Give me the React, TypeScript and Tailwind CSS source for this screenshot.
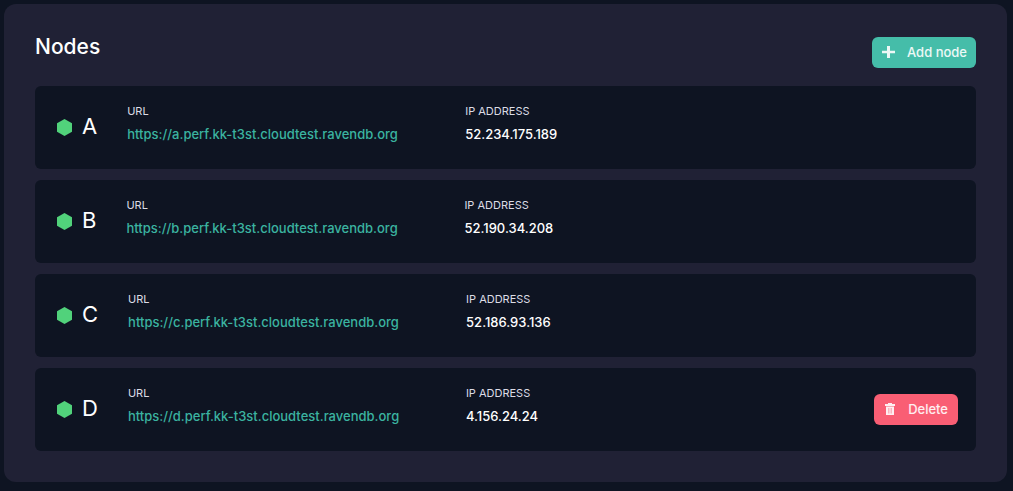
import React from "react";

type ClusterNode = {
  tag: string;
  url: string;
  ip: string;
  removable?: boolean;
};

const nodes: ClusterNode[] = [
  { tag: "A", url: "https://a.perf.kk-t3st.cloudtest.ravendb.org", ip: "52.234.175.189" },
  { tag: "B", url: "https://b.perf.kk-t3st.cloudtest.ravendb.org", ip: "52.190.34.208" },
  { tag: "C", url: "https://c.perf.kk-t3st.cloudtest.ravendb.org", ip: "52.186.93.136" },
  { tag: "D", url: "https://d.perf.kk-t3st.cloudtest.ravendb.org", ip: "4.156.24.24", removable: true },
];

const HexagonIcon: React.FC = () => (
  <svg className="h-[17px] w-[15px] shrink-0" viewBox="0 0 15 17" fill="#51d27b" aria-hidden="true">
    <path d="M7.5 0 15 4.2v8.6L7.5 17 0 12.8V4.2z" />
  </svg>
);

const PlusIcon: React.FC = () => (
  <svg className="mb-[2px] h-3 w-[13px]" viewBox="0 0 13 12" fill="currentColor" aria-hidden="true">
    <path d="M5 0h3v4.7h5v2.6H8V12H5V7.3H0V4.7h5z" />
  </svg>
);

const TrashIcon: React.FC = () => (
  <svg className="mb-[2px] h-3 w-[10px]" viewBox="0 0 10 12" fill="currentColor" aria-hidden="true">
    <path d="M3 0h4v1h3v2H0V1h3z" />
    <path d="M1 3.5h8V12H1z" />
    <path d="M3 5h.8v5.5H3zM4.6 5h.8v5.5h-.8zM6.2 5H7v5.5h-.8z" fill="#f95e74" fillOpacity="0.5" />
  </svg>
);

const NodeRow: React.FC<{ node: ClusterNode }> = ({ node }) => (
  <li className="flex h-[83px] items-center rounded-md bg-[#0e1422] pr-[18px] pl-[22px]">
    <HexagonIcon />
    <span className="mr-[30px] ml-[10px] pb-1 text-[22px] leading-7">{node.tag}</span>
    <dl className="grid grow grid-cols-[338px_1fr] pb-[6px]">
      <div>
        <dt className="text-[11px] leading-4 text-[#dcdce6]">URL</dt>
        <dd className="mt-[3px] text-[13px] leading-6 font-medium">
          <a href={node.url} className="text-[#3bb3a0]">
            {node.url}
          </a>
        </dd>
      </div>
      <div>
        <dt className="text-[11px] leading-4 text-[#dcdce6]">IP ADDRESS</dt>
        <dd className="mt-[3px] text-[13px] leading-6 font-medium">{node.ip}</dd>
      </div>
    </dl>
    {node.removable && (
      <button
        type="button"
        className="flex h-[31px] items-center gap-[13px] rounded-md bg-[#f95e74] pr-[10px] pl-[11px] text-[13px] font-medium text-white/90"
      >
        <TrashIcon />
        Delete
      </button>
    )}
  </li>
);

const App: React.FC = () => {
  return (
    <div className="min-h-screen bg-[#0e1422] pt-1 pr-[6px] pb-[9px] pl-1 font-['Inter',sans-serif] text-white">
      <section className="rounded-xl bg-[#202135] px-[31px] pt-[33px] pb-[31px]">
        <header className="mb-[18px] flex items-start justify-between">
          <h2 className="text-[21px] leading-5 font-medium">Nodes</h2>
          <button
            type="button"
            className="flex h-[31px] items-center gap-3 rounded-md bg-[#45bda9] pr-[9px] pl-[10px] text-[13px] font-medium text-white/90"
          >
            <PlusIcon />
            Add node
          </button>
        </header>
        <ul className="flex flex-col gap-[11px]">
          {nodes.map((node) => (
            <NodeRow key={node.tag} node={node} />
          ))}
        </ul>
      </section>
    </div>
  );
};

export default App;
